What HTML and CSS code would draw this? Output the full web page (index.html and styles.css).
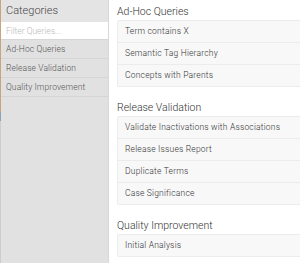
FILE: index.html
```html
<!DOCTYPE html>
<html>
<head>
<meta charset="utf-8">
<link rel="stylesheet" href="styles.css">
</head>
<body>
<div class="app">
  <aside class="sidebar">
    <div class="side-head">Categories</div>
    <div class="filter">Filter Queries...</div>
    <ul class="cats">
      <li>Ad-Hoc Queries</li>
      <li>Release Validation</li>
      <li>Quality Improvement</li>
    </ul>
  </aside>
  <main class="main">
    <section class="group">
      <h2 class="group-title">Ad-Hoc Queries</h2>
      <ul class="card">
        <li>Term contains X</li>
        <li>Semantic Tag Hierarchy</li>
        <li>Concepts with Parents</li>
      </ul>
    </section>
    <section class="group">
      <h2 class="group-title">Release Validation</h2>
      <ul class="card">
        <li>Validate Inactivations with Associations</li>
        <li>Release Issues Report</li>
        <li>Duplicate Terms</li>
        <li>Case Significance</li>
      </ul>
    </section>
    <section class="group">
      <h2 class="group-title">Quality Improvement</h2>
      <ul class="card">
        <li>Initial Analysis</li>
      </ul>
    </section>
  </main>
</div>
</body>
</html>
```
FILE: styles.css
```css
html, body {
  margin: 0;
  padding: 0;
  background: #ffffff;
  font-family: Roboto, "Liberation Sans", sans-serif;
  overflow: hidden;
}
.app {
  display: flex;
  height: 263px;
  width: 300px;
}
.sidebar {
  flex: none;
  width: 109px;
  box-sizing: border-box;
  padding-left: 1px;
  border-right: 1px solid #d8d8d8;
  background:
    linear-gradient(to bottom, #c9a57f 0, #c9a57f 112px, #8aa3bb 112px, #8aa3bb 121px, #cdcdcd 121px) left top / 1px 100% no-repeat,
    #e1e1e1;
}
.side-head {
  height: 22px;
  line-height: 22px;
  padding-left: 5px;
  font-size: 11px;
  font-weight: 300;
  color: #444;
  background: #e4e4e4;
}
.filter {
  height: 18px;
  line-height: 18px;
  background: #ffffff;
  padding-left: 5px;
  font-size: 8.5px;
  font-weight: 300;
  color: #b8b8b8;
  border-bottom: 1px solid #d6d6d6;
  box-sizing: border-box;
}
.cats {
  list-style: none;
  margin: 0;
  padding: 0;
}
.cats li {
  height: 18px;
  line-height: 18px;
  padding-left: 5px;
  font-size: 8.5px;
  font-weight: 300;
  color: #555;
  letter-spacing: 0.1px;
  border-bottom: 1px solid #d5d5d5;
}
.main {
  flex: 1;
  padding: 3px 0 0 8px;
  min-width: 0;
}
.group + .group {
  margin-top: 12px;
}
.group-title {
  margin: 0;
  height: 17px;
  line-height: 17px;
  font-size: 10.5px;
  font-weight: 300;
  color: #333;
}
.card {
  list-style: none;
  margin: 0;
  padding: 0;
  background: #f8f8f8;
  border: 1px solid #ececec;
  border-right: none;
  border-radius: 2px 0 0 2px;
  margin-right: -4px;
}
.card li {
  height: 21px;
  line-height: 21px;
  padding-left: 7px;
  font-size: 8.5px;
  font-weight: 300;
  letter-spacing: 0.2px;
  color: #333;
  border-bottom: 1px solid #ececec;
  white-space: nowrap;
}
.card li:last-child {
  border-bottom: none;
}
```
